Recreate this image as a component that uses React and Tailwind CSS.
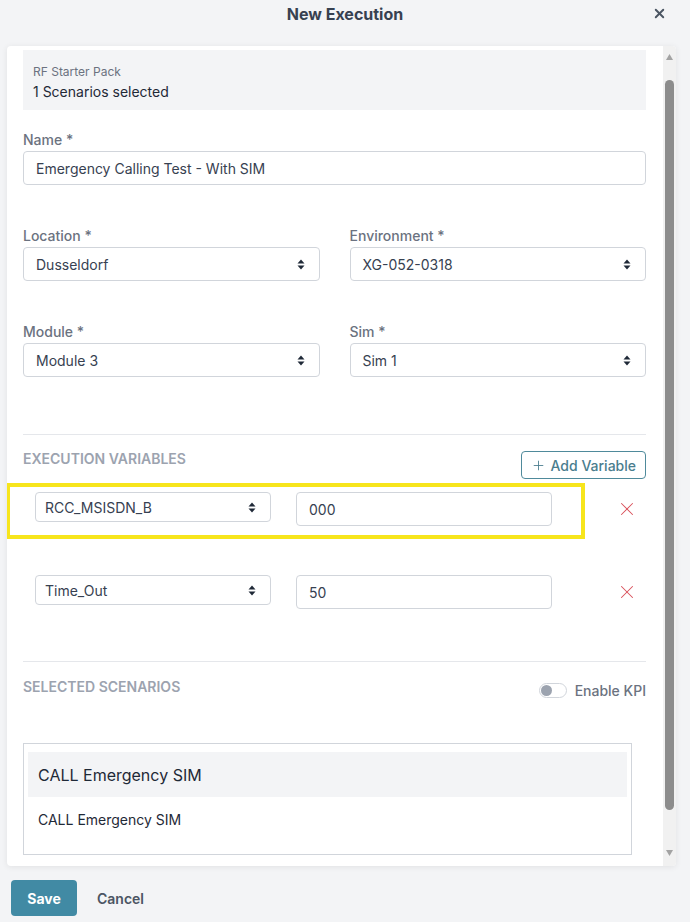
import { Plus, X } from "lucide-react";

function Arrows() {
  return (
    <svg width="8" height="11" viewBox="0 0 8 11" className="shrink-0">
      <path d="M4 0.5 L7.5 4.5 L0.5 4.5 Z" fill="#1f2937" />
      <path d="M4 10.5 L7.5 6.5 L0.5 6.5 Z" fill="#1f2937" />
    </svg>
  );
}

function Select({ value, className }) {
  return (
    <div className={`flex items-center justify-between border border-[#d1d5db] rounded-[4px] bg-white pr-[14px] text-[14px] text-[#374151] ${className}`}>
      <span>{value}</span>
      <Arrows />
    </div>
  );
}

function Field({ label, children, className = "" }) {
  return (
    <div className={`flex flex-col ${className}`}>
      <label className="text-[14px] leading-[20px] font-medium text-[#6b7280]">{label}</label>
      <div className="mt-[1px]">{children}</div>
    </div>
  );
}

function VarRow({ name, value }) {
  return (
    <div className="flex items-start pl-[12px]">
      <Select value={name} className="w-[236px] h-[30px] pl-[9px]" />
      <div className="ml-[25px] w-[256px] h-[34px] border border-[#d1d5db] rounded-[4px] flex items-center pl-[12px] text-[14px] text-[#374151]">
        {value}
      </div>
      <div className="ml-[64px] h-[34px] flex items-center">
        <X size={22} strokeWidth={1.1} color="#d9505a" />
      </div>
    </div>
  );
}

export default function App() {
  return (
    <div className="w-[690px] h-[922px] bg-[#f3f4f6] flex flex-col overflow-hidden" style={{ fontFamily: "Inter, 'Noto Sans', sans-serif" }}>
      <div className="relative h-[46px] flex justify-center">
        <h1 className="mt-[2px] text-[16px] leading-[24px] font-bold text-[#374151]">New Execution</h1>
        <button className="absolute right-[23px] top-[6px] text-[#4b5563]">
          <X size={15} strokeWidth={3} />
        </button>
      </div>

      <div className="ml-[7px] w-[669px] h-[820px] bg-white rounded-[4px] shadow-[0_1px_6px_rgba(0,0,0,0.08)] flex overflow-hidden">
        <div className="flex-1 pl-[16px] pr-[17px] pt-[4px] flex flex-col">
          <div className="h-[60px] bg-[#f3f4f6] px-[10px] pt-[14px]">
            <div className="text-[12px] leading-[16px] text-[#6b7280]">RF Starter Pack</div>
            <div className="mt-[2px] text-[14px] leading-[20px] text-[#1f2937]">1 Scenarios selected</div>
          </div>

          <Field label="Name *" className="mt-[20px]">
            <div className="h-[34px] border border-[#d1d5db] rounded-[4px] flex items-center pl-[12px] text-[14px] text-[#374151]">
              Emergency Calling Test - With SIM
            </div>
          </Field>

          <div className="mt-[41px] grid grid-cols-2 gap-x-[30px]">
            <Field label="Location *">
              <Select value="Dusseldorf" className="h-[34px] pl-[12px]" />
            </Field>
            <Field label="Environment *">
              <Select value="XG-052-0318" className="h-[34px] pl-[12px]" />
            </Field>
          </div>

          <div className="mt-[41px] grid grid-cols-2 gap-x-[30px]">
            <Field label="Module *">
              <Select value="Module 3" className="h-[34px] pl-[12px]" />
            </Field>
            <Field label="Sim *">
              <Select value="Sim 1" className="h-[34px] pl-[12px]" />
            </Field>
          </div>

          <div className="mt-[57px] border-t border-[#e5e7eb]" />

          <div className="mt-[14px] flex justify-between items-start">
            <div className="text-[14px] leading-[20px] font-semibold text-[#9ca3af] uppercase">Execution Variables</div>
            <button className="mt-[2px] h-[28px] px-[9px] border border-[#4f8a9b] rounded-[4px] flex items-center gap-[5px] text-[14px] font-medium text-[#4a7d8e]">
              <Plus size={15} strokeWidth={1.4} />
              Add Variable
            </button>
          </div>

          <div className="relative mt-[13px]">
            <div className="absolute left-[-17px] top-[-9px] w-[579px] h-[56px] border-[4px] border-[#f7e51c] pointer-events-none" />
            <VarRow name="RCC_MSISDN_B" value="000" />
          </div>

          <div className="mt-[49px]">
            <VarRow name="Time_Out" value="50" />
          </div>

          <div className="mt-[52px] border-t border-[#e5e7eb]" />

          <div className="mt-[15px] flex justify-between items-start">
            <div className="text-[14px] leading-[20px] font-semibold text-[#9ca3af] uppercase">Selected Scenarios</div>
            <div className="mt-[3px] flex items-center gap-[8px]">
              <div className="w-[28px] h-[15px] rounded-full border border-[#d1d5db] bg-white flex items-center px-[1px]">
                <div className="w-[11px] h-[11px] rounded-full bg-[#9ca3af]" />
              </div>
              <span className="text-[14px] font-medium text-[#6b7280]">Enable KPI</span>
            </div>
          </div>

          <div className="mt-[42px] w-[609px] h-[112px] border border-[#d1d5db] px-[4px] pt-[8px]">
            <div className="h-[45px] bg-[#f3f4f6] flex items-center pl-[10px] text-[16px] text-[#1f2937]">
              CALL Emergency SIM
            </div>
            <div className="mt-[12px] pl-[10px] text-[14px] text-[#1f2937]">CALL Emergency SIM</div>
          </div>
        </div>

        <div className="w-[13px] bg-[#f1f1f1] flex flex-col items-center">
          <svg width="9" height="8" viewBox="0 0 9 8" className="mt-[7px]">
            <path d="M4.5 1 L8 7 L1 7 Z" fill="#a3a3a3" />
          </svg>
          <div className="mt-[19px] w-[9px] h-[730px] rounded-full bg-[#8c8c8c]" />
          <div className="flex-1" />
          <svg width="9" height="8" viewBox="0 0 9 8" className="mb-[9px]">
            <path d="M1 1 L8 1 L4.5 7 Z" fill="#a3a3a3" />
          </svg>
        </div>
      </div>

      <div className="mt-[14px] ml-[11px] flex items-center">
        <button className="w-[66px] h-[36px] bg-[#418aa4] rounded-[4px] text-white font-bold text-[14px]">Save</button>
        <button className="ml-[20px] text-[14px] font-semibold text-[#4b5563]">Cancel</button>
      </div>
    </div>
  );
}
